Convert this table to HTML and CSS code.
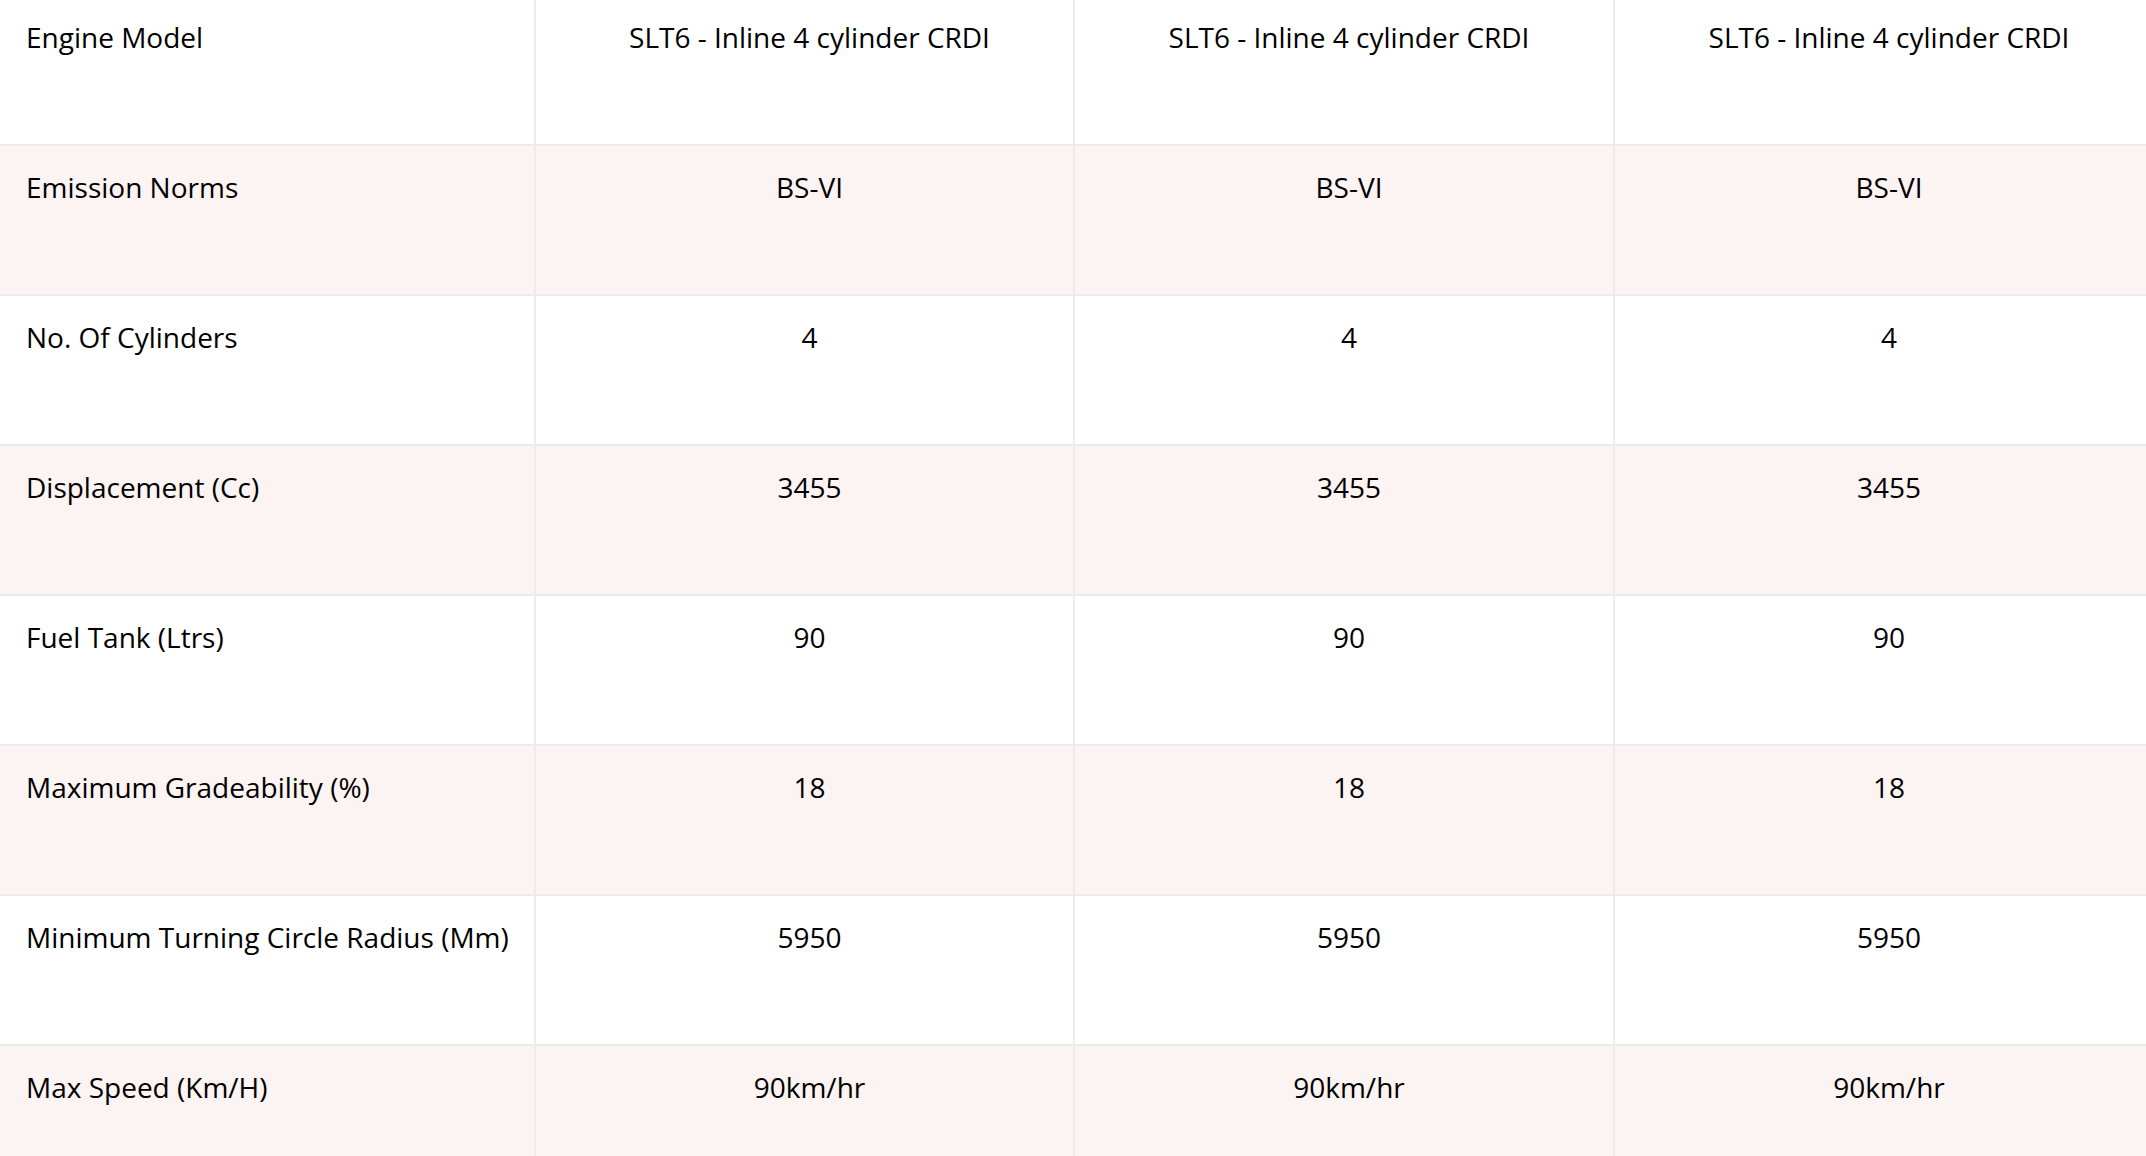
FILE: index.html
```html
<!DOCTYPE html>
<html lang="en">
<head>
<meta charset="utf-8">
<title>Specifications</title>
<link rel="stylesheet" href="styles.css">
</head>
<body>
<div class="spec-table" role="table">
  <div class="spec-row" role="row">
    <div class="cell label" role="rowheader">Engine Model</div>
    <div class="cell value" role="cell">SLT6 - Inline 4 cylinder CRDI</div>
    <div class="cell value" role="cell">SLT6 - Inline 4 cylinder CRDI</div>
    <div class="cell value" role="cell">SLT6 - Inline 4 cylinder CRDI</div>
  </div>
  <div class="spec-row alt" role="row">
    <div class="cell label" role="rowheader">Emission Norms</div>
    <div class="cell value" role="cell">BS-VI</div>
    <div class="cell value" role="cell">BS-VI</div>
    <div class="cell value" role="cell">BS-VI</div>
  </div>
  <div class="spec-row" role="row">
    <div class="cell label" role="rowheader">No. Of Cylinders</div>
    <div class="cell value" role="cell">4</div>
    <div class="cell value" role="cell">4</div>
    <div class="cell value" role="cell">4</div>
  </div>
  <div class="spec-row alt" role="row">
    <div class="cell label" role="rowheader">Displacement (Cc)</div>
    <div class="cell value" role="cell">3455</div>
    <div class="cell value" role="cell">3455</div>
    <div class="cell value" role="cell">3455</div>
  </div>
  <div class="spec-row" role="row">
    <div class="cell label" role="rowheader">Fuel Tank (Ltrs)</div>
    <div class="cell value" role="cell">90</div>
    <div class="cell value" role="cell">90</div>
    <div class="cell value" role="cell">90</div>
  </div>
  <div class="spec-row alt" role="row">
    <div class="cell label" role="rowheader">Maximum Gradeability (%)</div>
    <div class="cell value" role="cell">18</div>
    <div class="cell value" role="cell">18</div>
    <div class="cell value" role="cell">18</div>
  </div>
  <div class="spec-row" role="row">
    <div class="cell label" role="rowheader">Minimum Turning Circle Radius (Mm)</div>
    <div class="cell value" role="cell">5950</div>
    <div class="cell value" role="cell">5950</div>
    <div class="cell value" role="cell">5950</div>
  </div>
  <div class="spec-row alt" role="row">
    <div class="cell label" role="rowheader">Max Speed (Km/H)</div>
    <div class="cell value" role="cell">90km/hr</div>
    <div class="cell value" role="cell">90km/hr</div>
    <div class="cell value" role="cell">90km/hr</div>
  </div>
</div>
</body>
</html>
```

FILE: styles.css
```css
html, body {
  margin: 0;
  padding: 0;
  background: #ffffff;
  overflow: hidden;
}

body {
  font-family: "Open Sans", "Noto Sans", sans-serif;
  font-size: 28px;
  line-height: 42px;
  color: #000000;
}

.spec-table {
  width: 2155px;
  margin-top: -4px;
}

.spec-row {
  display: grid;
  grid-template-columns: 536px 539px 540px 540px;
  height: 150px;
  box-sizing: border-box;
  border-bottom: 2px solid #ececec;
  background: #ffffff;
}

.spec-row.alt {
  background: #fcf3f3;
}

.cell {
  padding-top: 20px;
  border-right: 2px solid #ececec;
  white-space: nowrap;
}

.label {
  text-align: left;
  padding-left: 26px;
  padding-right: 20px;
}

.value {
  text-align: center;
  padding-left: 28px;
  padding-right: 18px;
}
```
